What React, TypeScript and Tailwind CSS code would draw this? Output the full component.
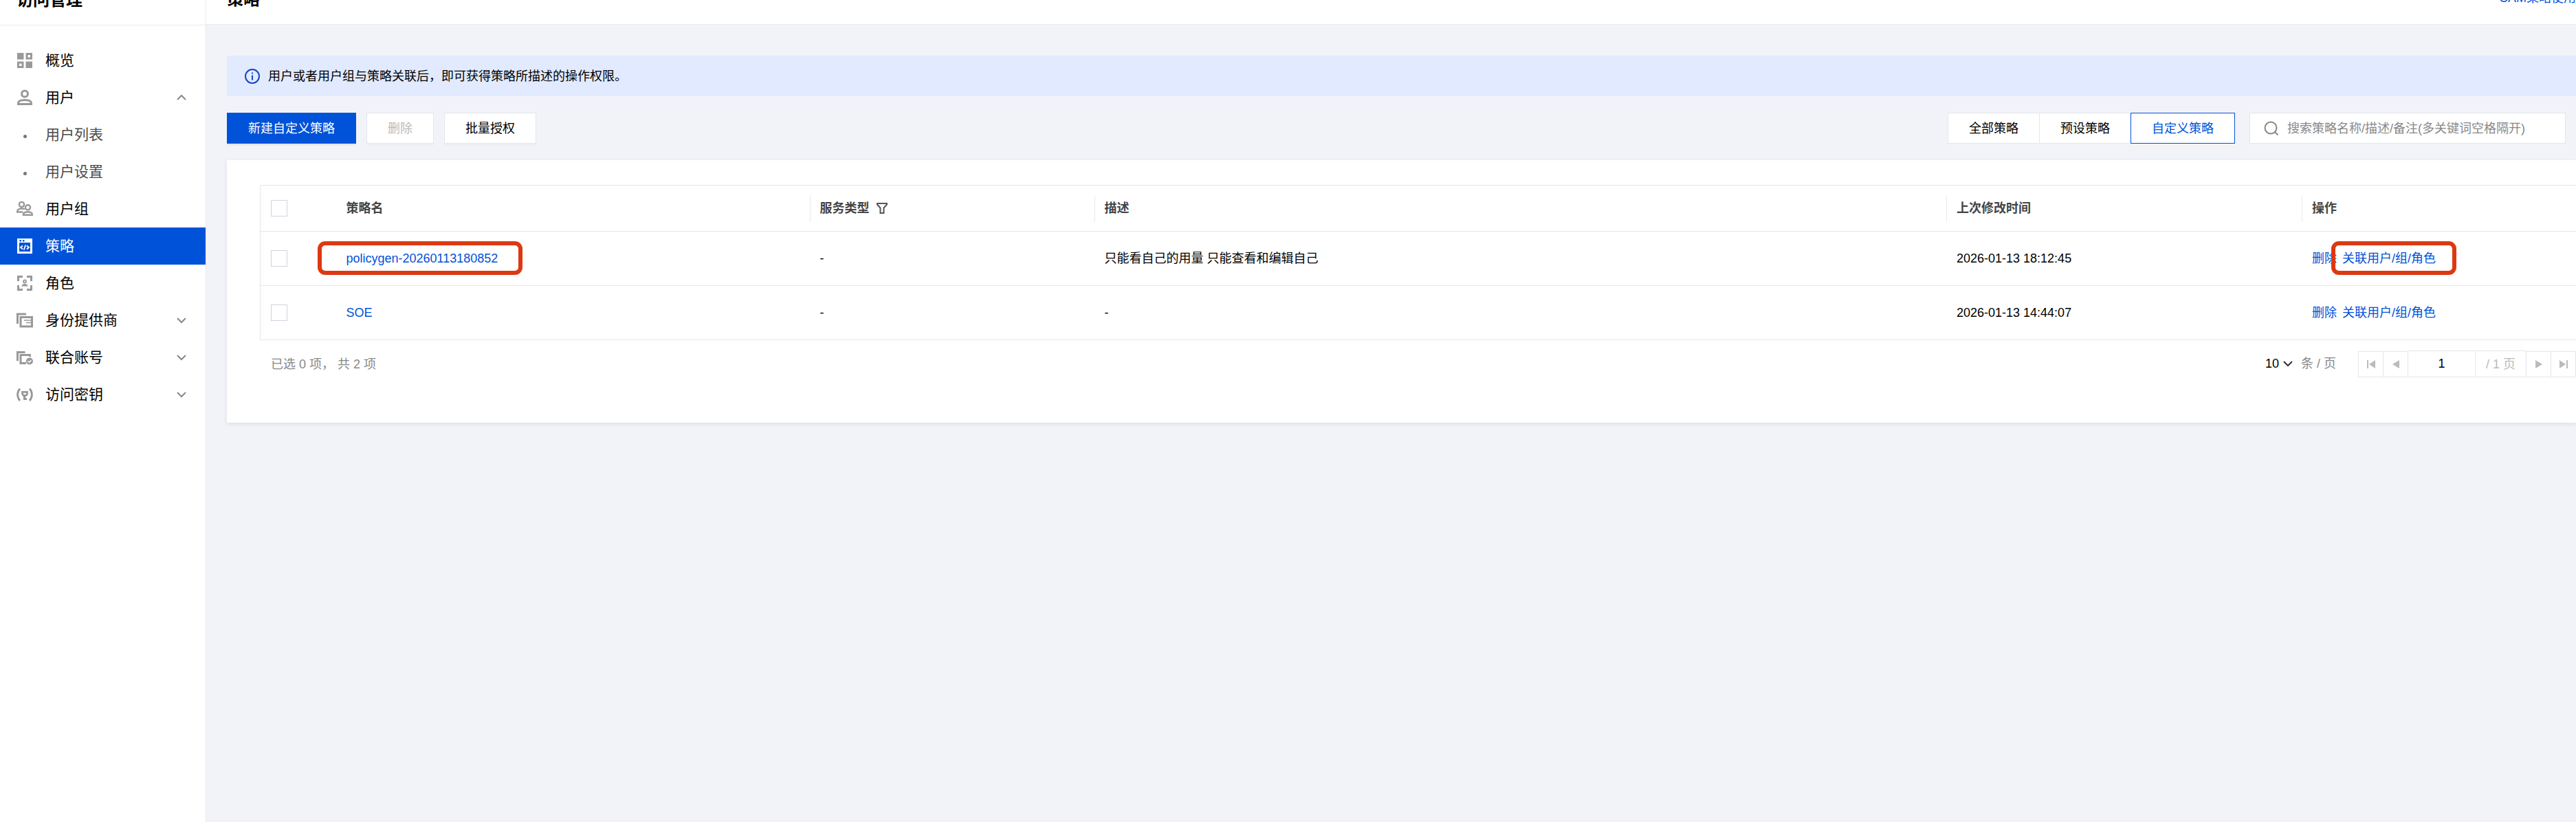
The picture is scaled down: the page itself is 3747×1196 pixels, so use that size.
import type { ReactNode } from 'react';

type NavItem = {
  name: string;
  icon?: ReactNode;
  child?: boolean;
  active?: boolean;
  arrow?: 'up' | 'down';
};

type Policy = {
  name: string;
  service: string;
  desc: string;
  time: string;
  marked?: boolean;
};

const Icon = ({ children }: { children: ReactNode }) => (
  <svg width="24" height="24" viewBox="0 0 24 24" fill="none" stroke="currentColor" strokeWidth="3">
    {children}
  </svg>
);

const navItems: NavItem[] = [
  {
    name: '概览',
    icon: (
      <Icon>
        <path d="M1 1h9.500v9.500H1zM13.500 13.500H23V23h-9.500z" fill="currentColor" stroke="none" />
        <path d="M15 2.500h6.500V9H15zM2.500 15H9v6.500H2.500z" />
      </Icon>
    ),
  },
  {
    name: '用户',
    arrow: 'up',
    icon: (
      <Icon>
        <circle cx="12" cy="6.500" r="4.500" />
        <path d="M2.500 21.500V20c0-3 4-4.500 9.500-4.500s9.500 1.500 9.500 4.500v1.500z" />
      </Icon>
    ),
  },
  { name: '用户列表', child: true },
  { name: '用户设置', child: true },
  {
    name: '用户组',
    icon: (
      <Icon>
        <g strokeWidth="2.400">
          <circle cx="7.500" cy="5.500" r="3.600" />
          <path d="M9.500 16.500H1.200V15c0-2 3-3.500 6.500-3.500 1.800 0 3.300.4 4.300 1" />
          <circle cx="16.500" cy="9.800" r="3.600" />
          <path d="M10 20.800h12.800V19.500c0-2-3-3.300-6.400-3.300s-6.400 1.300-6.400 3.300z" />
        </g>
      </Icon>
    ),
  },
  {
    name: '策略',
    active: true,
    icon: (
      <Icon>
        <path d="M1 1h22v22H1z" fill="currentColor" stroke="none" />
        <path d="M4 7h16v13H4z" fill="#0052d9" stroke="none" />
        <path d="M4.500 4.200H7M9 4.200h2.500" stroke="#0052d9" strokeWidth="2.400" />
        <path d="M9 11.500l-3 2.500 3 2.500M15 11.500l3 2.500-3 2.500M13.200 10.500l-2.400 7" strokeWidth="1.800" />
      </Icon>
    ),
  },
  {
    name: '角色',
    icon: (
      <Icon>
        <path d="M2.500 9V2.500H9M15 2.500h6.500V9M21.500 15v6.500H15M9 21.500H2.500V15" />
        <circle cx="12" cy="9.500" r="2" strokeWidth="1.800" />
        <path d="M7.500 16.500c0-2.500 2-3.500 4.500-3.500s4.500 1 4.500 3.500z" fill="currentColor" stroke="none" />
      </Icon>
    ),
  },
  {
    name: '身份提供商',
    arrow: 'down',
    icon: (
      <Icon>
        <path d="M1.500 17V3H14" />
        <path d="M6 7.500h16.500v13.500H6z" />
        <path d="M11 12h11M14 15.500h8" strokeWidth="1.600" />
      </Icon>
    ),
  },
  {
    name: '联合账号',
    arrow: 'down',
    icon: (
      <Icon>
        <path d="M1.500 17V4.500H12.500" />
        <path d="M19.500 11V8.500H6v12h8" />
        <circle cx="19" cy="17.500" r="5" fill="currentColor" stroke="none" />
        <path d="M16.500 17.200l2 2 3-3.200" stroke="#fff" strokeWidth="1.600" />
      </Icon>
    ),
  },
  {
    name: '访问密钥',
    arrow: 'down',
    icon: (
      <Icon>
        <path d="M5 3.500c-4.500 5-4.500 12.500 0 17.500M19 3.500c4.500 5 4.500 12.500 0 17.500" strokeWidth="2.800" />
        <path d="M8.500 8.300h7v3l-1.500 2h-4l-1.500-2z" strokeWidth="2.800" />
        <path d="M11.500 13v7M11 18.500h4" strokeWidth="3" />
      </Icon>
    ),
  },
];

const policies: Policy[] = [
  {
    name: 'policygen-20260113180852',
    service: '-',
    desc: '只能看自己的用量 只能查看和编辑自己',
    time: '2026-01-13 18:12:45',
    marked: true,
  },
  { name: 'SOE', service: '-', desc: '-', time: '2026-01-13 14:44:07' },
];

const Chevron = ({ up }: { up?: boolean }) => (
  <svg width="14" height="14" viewBox="0 0 14 14" fill="none" stroke="currentColor" strokeWidth="2">
    <path d={up ? 'M1 10l6-6 6 6' : 'M1 4l6 6 6-6'} />
  </svg>
);

const SideBar = () => {
  return (
    <aside className="w-[300px] shrink-0 border-r border-[#e7eaef] bg-white">
      <div className="flex h-[37px] items-end overflow-hidden border-b border-[#e7eaef] px-6 pb-5">
        <h2 className="text-2xl font-bold">访问管理</h2>
      </div>
      <nav className="pt-6">
        {navItems.map((item) => (
          <a
            key={item.name}
            href="#"
            className={`flex h-[54px] items-center px-6 text-[21px] ${
              item.active ? 'bg-[#0052d9] text-white' : item.child ? 'text-[#4b4b4b]' : 'text-black'
            }`}
          >
            <span className={`mr-[18px] flex w-6 justify-center ${item.active ? 'text-white' : 'text-[#999]'}`}>
              {item.icon ?? <span className="mt-1 size-[5px] rounded-full bg-[#777]" />}
            </span>
            {item.name}
            {item.arrow && (
              <span className="mr-1 ml-auto text-[#888]">
                <Chevron up={item.arrow === 'up'} />
              </span>
            )}
          </a>
        ))}
      </nav>
    </aside>
  );
};

const CheckBox = ({ label }: { label: string }) => (
  <input
    type="checkbox"
    aria-label={label}
    className="block size-6 appearance-none border border-[#cfd5de] bg-white"
  />
);

const HeadCell = ({ children }: { children: ReactNode }) => (
  <th className="p-0 text-left font-bold">
    <div className="flex h-[39px] items-center gap-[10px] border-l border-[#e7eaef] pl-[14px]">{children}</div>
  </th>
);

const Mark = ({ wide }: { wide?: boolean }) => (
  <span
    className={`pointer-events-none absolute -top-[11px] h-[49px] rounded-[11px] border-6 border-[#dc3912] ${
      wide ? '-right-[36px] -left-[42px]' : '-right-[30px] -left-[16px]'
    }`}
  />
);

const Toolbar = () => {
  return (
    <div className="flex h-[45px] items-stretch justify-between pr-[15px]">
      <div className="flex gap-[15px]">
        <button className="bg-[#0052d9] px-[31px] text-white shadow-[0_3px_0_#e2e8f3]">新建自定义策略</button>
        <button disabled className="border border-[#e3e6ee] bg-white px-[30px] text-[#bbb] shadow-[0_3px_0_#eeeff3]">
          删除
        </button>
        <button className="border border-[#e3e6ee] bg-white px-[30px] shadow-[0_3px_0_#eeeff3]">批量授权</button>
      </div>
      <div className="flex">
        <button className="border border-[#e3e6ee] bg-white px-[30px]">全部策略</button>
        <button className="border-y border-[#e3e6ee] bg-white px-[30px]">预设策略</button>
        <button className="border border-[#0052d9] bg-white px-[30px] text-[#0052d9]">自定义策略</button>
        <label className="ml-[21px] flex w-[460px] items-center gap-3 border border-[#e3e6ee] bg-white pl-5">
          <svg width="22" height="22" viewBox="0 0 22 22" fill="none" stroke="#888" strokeWidth="2">
            <circle cx="10" cy="10" r="8.500" />
            <path d="M16 16l4.500 4.500" />
          </svg>
          <input
            type="text"
            aria-label="搜索策略"
            placeholder="搜索策略名称/描述/备注(多关键词空格隔开)"
            className="min-w-0 flex-1 outline-none placeholder:text-[#888]"
          />
        </label>
      </div>
    </div>
  );
};

const PolicyTable = () => {
  return (
    <table className="w-full table-fixed border-collapse border border-r-0 border-[#e3e6ee]">
      <colgroup>
        <col className="w-[110px]" />
        <col className="w-[689px]" />
        <col className="w-[414px]" />
        <col />
        <col className="w-[517px]" />
        <col className="w-[399px]" />
      </colgroup>
      <thead>
        <tr className="h-[67px] border-b border-[#e3e6ee] text-[#444]">
          <th className="p-0 pl-[15px]">
            <CheckBox label="全选" />
          </th>
          <th className="p-0 pl-[15px] text-left font-bold">策略名</th>
          <HeadCell>
            服务类型
            <svg width="16" height="16" viewBox="0 0 16 16" fill="none" stroke="#555" strokeWidth="2">
              <path d="M1 1h14v1.500L10.500 7.500V15h-5V7.500L1 2.500z" />
            </svg>
          </HeadCell>
          <HeadCell>描述</HeadCell>
          <HeadCell>上次修改时间</HeadCell>
          <HeadCell>操作</HeadCell>
        </tr>
      </thead>
      <tbody>
        {policies.map((policy) => (
          <tr key={policy.name} className="h-[79px] border-b border-[#e3e6ee]">
            <td className="p-0 pl-[15px]">
              <CheckBox label={policy.name} />
            </td>
            <td className="p-0 pl-[15px]">
              <span className="relative inline-block">
                <a href="#" className="text-[#0052d9]">
                  {policy.name}
                </a>
                {policy.marked && <Mark wide />}
              </span>
            </td>
            <td className="p-0 pl-[15px]">{policy.service}</td>
            <td className="p-0 pl-[15px]">{policy.desc}</td>
            <td className="p-0 pl-[15px]">{policy.time}</td>
            <td className="p-0 pl-[15px]">
              <div className="flex gap-2 text-[#0052d9]">
                <a href="#">删除</a>
                <span className="relative">
                  <a href="#">关联用户/组/角色</a>
                  {policy.marked && <Mark />}
                </span>
              </div>
            </td>
          </tr>
        ))}
      </tbody>
    </table>
  );
};

const pageButton = 'flex h-[38px] items-center justify-center border border-[#e3e6ee]';

const Pagination = () => {
  return (
    <div className="flex items-start justify-between pt-[15px] pl-4">
      <p className="pt-[6px] text-[#888]">已选 0 项， 共 2 项</p>
      <div className="flex items-end">
        <div className="mr-8 flex h-[39px] items-center pb-[2px]">
          <select aria-label="每页条数" className="w-5 appearance-none">
            <option>10</option>
          </select>
          <span className="mr-3 ml-[6px] text-[#333]">
            <Chevron />
          </span>
          <span className="text-[#888]">条 / 页</span>
        </div>
        <button aria-label="首页" className={`${pageButton} w-[37px]`}>
          <svg width="12" height="12" viewBox="0 0 12 12" fill="#bbb">
            <path d="M0 0h2v12H0zM12 0v12L3 6z" />
          </svg>
        </button>
        <button aria-label="上一页" className={`${pageButton} w-9 border-l-0`}>
          <svg width="12" height="12" viewBox="0 0 12 12" fill="#bbb">
            <path d="M11 0v12L1 6z" />
          </svg>
        </button>
        <input
          type="text"
          aria-label="页码"
          defaultValue="1"
          className="h-[39px] w-[97px] border-y border-[#e3e6ee] text-center"
        />
        <span className="flex h-[39px] w-[75px] items-center justify-center border border-[#e3e6ee] text-[#bbb]">
          / 1 页
        </span>
        <button aria-label="下一页" className={`${pageButton} w-9 border-l-0`}>
          <svg width="12" height="12" viewBox="0 0 12 12" fill="#bbb">
            <path d="M1 0v12l10-6z" />
          </svg>
        </button>
        <button aria-label="末页" className={`${pageButton} w-9 border-l-0`}>
          <svg width="12" height="12" viewBox="0 0 12 12" fill="#bbb">
            <path d="M10 0h2v12h-2zM0 0v12l9-6z" />
          </svg>
        </button>
      </div>
    </div>
  );
};

const App = () => {
  return (
    <div className="flex min-h-screen overflow-hidden bg-[#f2f3f8] font-['Liberation_Sans','Noto_Sans_CJK_SC',sans-serif] text-lg leading-7 text-black">
      <SideBar />
      <main className="min-w-0 flex-1">
        <header className="flex h-9 items-end justify-between overflow-hidden border-b border-[#e7eaef] bg-white pb-5 pl-[30px]">
          <h1 className="text-2xl font-bold">策略</h1>
          <a href="#" className="pb-1 whitespace-nowrap text-[#0052d9]">
            CAM策略使用
          </a>
        </header>
        <div className="flex flex-col gap-6 pt-[45px] pl-[30px]">
          <div className="flex h-[59px] items-center gap-3 bg-[#e1eaff] pl-[26px]">
            <svg width="22" height="22" viewBox="0 0 22 22" fill="none" stroke="#1447c0" strokeWidth="2">
              <circle cx="11" cy="11" r="10" />
              <path d="M11 9.500v7M11 5.500v2" />
            </svg>
            <p>用户或者用户组与策略关联后，即可获得策略所描述的操作权限。</p>
          </div>
          <Toolbar />
          <section className="bg-white pt-9 pb-[66px] pl-12 shadow-[0_2px_6px_rgba(54,58,80,0.1)]">
            <PolicyTable />
            <Pagination />
          </section>
        </div>
      </main>
    </div>
  );
};

export default App;
